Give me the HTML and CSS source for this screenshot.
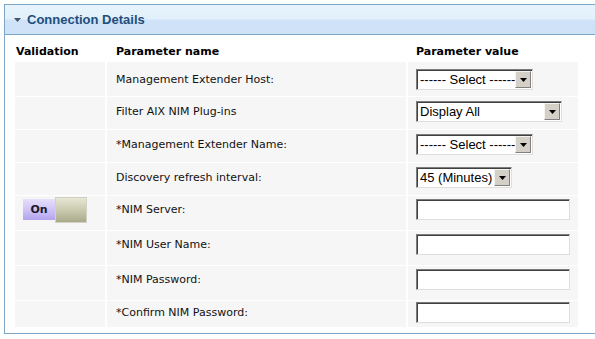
FILE: index.html
```html
<!DOCTYPE html>
<html>
<head>
<meta charset="utf-8">
<link rel="stylesheet" href="styles.css">
</head>
<body>
<div class="panel">
  <div class="panel-head">
    <svg class="twisty" width="7" height="4" viewBox="0 0 7 4"><path d="M0 0H7L3.5 4Z" fill="#46566a"/></svg>
    <span class="panel-title">Connection Details</span>
  </div>
  <div class="grid">
    <div class="row head">
      <div class="cell c-val">Validation</div>
      <div class="cell c-name">Parameter name</div>
      <div class="cell c-value">Parameter value</div>
    </div>
    <div class="row sel first">
      <div class="cell c-val"></div>
      <div class="cell c-name"><span class="label">Management Extender Host:</span></div>
      <div class="cell c-value"><div class="select w117"><span class="sel-text">------ Select ------</span><span class="sel-btn"><svg width="7" height="4" viewBox="0 0 7 4"><path d="M0 0H7L3.5 4Z" fill="#000"/></svg></span></div></div>
    </div>
    <div class="row sel">
      <div class="cell c-val"></div>
      <div class="cell c-name"><span class="label">Filter AIX NIM Plug-ins</span></div>
      <div class="cell c-value"><div class="select w146"><span class="sel-text">Display All</span><span class="sel-btn"><svg width="7" height="4" viewBox="0 0 7 4"><path d="M0 0H7L3.5 4Z" fill="#000"/></svg></span></div></div>
    </div>
    <div class="row sel">
      <div class="cell c-val"></div>
      <div class="cell c-name"><span class="label">*Management Extender Name:</span></div>
      <div class="cell c-value"><div class="select w117"><span class="sel-text">------ Select ------</span><span class="sel-btn"><svg width="7" height="4" viewBox="0 0 7 4"><path d="M0 0H7L3.5 4Z" fill="#000"/></svg></span></div></div>
    </div>
    <div class="row sel">
      <div class="cell c-val"></div>
      <div class="cell c-name"><span class="label">Discovery refresh interval:</span></div>
      <div class="cell c-value"><div class="select w96"><span class="sel-text">45 (Minutes)</span><span class="sel-btn"><svg width="7" height="4" viewBox="0 0 7 4"><path d="M0 0H7L3.5 4Z" fill="#000"/></svg></span></div></div>
    </div>
    <div class="row inp">
      <div class="cell c-val"><div class="toggle"><span class="toggle-on">On</span><span class="toggle-off"></span></div></div>
      <div class="cell c-name"><span class="label">*NIM Server:</span></div>
      <div class="cell c-value"><input class="text" type="text"></div>
    </div>
    <div class="row inp">
      <div class="cell c-val"></div>
      <div class="cell c-name"><span class="label">*NIM User Name:</span></div>
      <div class="cell c-value"><input class="text" type="text"></div>
    </div>
    <div class="row inp">
      <div class="cell c-val"></div>
      <div class="cell c-name"><span class="label">*NIM Password:</span></div>
      <div class="cell c-value"><input class="text" type="password"></div>
    </div>
    <div class="row inp last">
      <div class="cell c-val"></div>
      <div class="cell c-name"><span class="label">*Confirm NIM Password:</span></div>
      <div class="cell c-value"><input class="text" type="password"></div>
    </div>
  </div>
</div>
</body>
</html>
```
FILE: styles.css
```css
html, body {
  margin: 0;
  padding: 0;
  background: #fdfefe;
  overflow: hidden;
}
body {
  width: 595px;
  height: 339px;
  font-family: "DejaVu Sans", Verdana, sans-serif;
  font-size: 11px;
  color: #111;
}
.panel {
  margin-top: 4px;
  margin-left: 4px;
  border: 1px solid #7fa6c6;
  border-right: none;
  background: #ffffff;
  padding-bottom: 6px;
}
.panel-head {
  height: 29px;
  display: flex;
  align-items: center;
  gap: 6px;
  padding-left: 9px;
  border-bottom: 1px solid #7fa6c6;
  background: linear-gradient(#e7f4fc 0%, #e2f0fb 48%, #d0e3f8 52%, #cde1f7 100%);
}
.panel-title {
  font-family: "Liberation Sans", Arial, sans-serif;
  font-weight: bold;
  font-size: 13px;
  color: #1e4e7b;
}
.grid {
  margin-left: 10px;
  padding-top: 1px;
  display: flex;
  flex-direction: column;
  gap: 1px;
}
.row {
  display: grid;
  grid-template-columns: 90px 299px 170px;
  column-gap: 2px;
}
.cell {
  background: #f6f6f6;
  box-sizing: border-box;
}
.row.head .cell {
  background: #ffffff;
  height: 25px;
  display: flex;
  align-items: flex-end;
  padding-bottom: 2px;
  font-weight: bold;
  line-height: 14px;
  color: #000;
}
.row.head .c-val { padding-left: 1px; }
.c-name { padding-left: 9px; }
.c-value { padding-left: 8px; }
.c-val { padding-left: 8px; }
.label { display: block; line-height: 21px; }
.row.sel .cell { height: 32px; padding-top: 4px; }
.row.sel.first .cell { height: 34px; padding-top: 7px; }
.row.inp .cell { height: 34px; padding-top: 3px; }
.row.inp.last .cell { height: 26px; padding-top: 1px; }

.select {
  box-sizing: border-box;
  height: 21px;
  display: flex;
  align-items: stretch;
  background: #fff;
  border: 1px solid;
  border-color: #7c7c7c #e0ded8 #e0ded8 #7c7c7c;
  box-shadow: inset 1px 1px 0 #404040;
  padding: 1px;
}
.w117 { width: 117px; }
.w146 { width: 146px; }
.w96 { width: 96px; }
.sel-text {
  flex: 1;
  font-family: "Liberation Sans", Arial, sans-serif;
  font-size: 13px;
  line-height: 17px;
  padding-left: 2px;
  color: #000;
  white-space: nowrap;
  overflow: hidden;
}
.sel-btn {
  width: 16px;
  box-sizing: border-box;
  background: #d4d0c8;
  border: 1px solid;
  border-color: #f4f3ef #808080 #808080 #f4f3ef;
  display: flex;
  align-items: center;
  justify-content: center;
}
.text {
  box-sizing: border-box;
  width: 154px;
  height: 21px;
  margin: 0;
  padding: 0 2px;
  background: #fff;
  border: 1px solid;
  border-color: #7c7c7c #e0ded8 #e0ded8 #7c7c7c;
  box-shadow: inset 1px 1px 0 #404040;
  font-family: "Liberation Sans", Arial, sans-serif;
  font-size: 13px;
  outline: none;
  display: block;
}
.toggle {
  display: flex;
  align-items: center;
  height: 21px;
}
.toggle-on {
  width: 32px;
  height: 21px;
  display: flex;
  align-items: center;
  justify-content: center;
  font-weight: bold;
  font-size: 11px;
  color: #1a1a2a;
  background: linear-gradient(#e6e0fb 0%, #cfc4f6 50%, #b3a3ef 100%);
}
.toggle-off {
  width: 32px;
  height: 26px;
  box-sizing: border-box;
  border: 1px solid #d2d2c4;
  background: linear-gradient(#e6e6d4 0%, #cacab0 50%, #a9a98a 100%);
}
```
